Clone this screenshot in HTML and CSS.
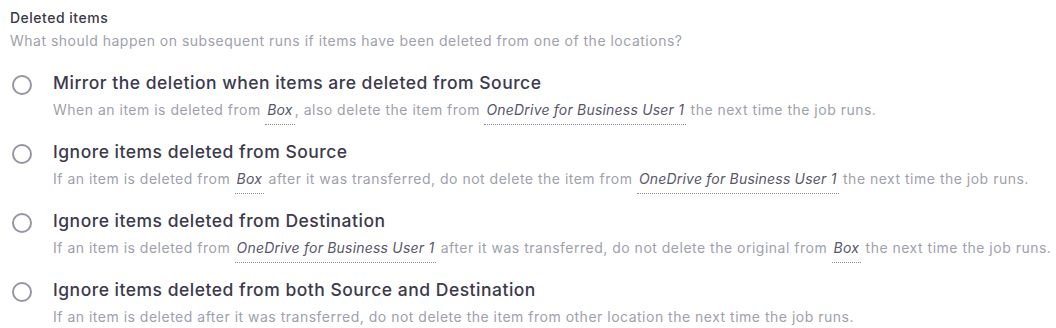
FILE: index.html
```html
<!DOCTYPE html>
<html lang="en">
<head>
  <meta charset="UTF-8" />
  <title>Deleted items</title>
  <link rel="stylesheet" href="styles.css">
</head>
<body>

<div class="section">
  <div class="section-title">Deleted items</div>
  <div class="section-hint">What should happen on subsequent runs if items have been deleted from one of the locations?</div>

  <label class="option">
    <span class="radio"></span>
    <span class="option-body">
      <span class="option-title">Mirror the deletion when items are deleted from Source</span>
      <span class="option-desc">When an item is deleted from <em class="loc">Box</em>, also delete the item from <em class="loc">OneDrive for Business User 1</em> the next time the job runs.</span>
    </span>
  </label>

  <label class="option">
    <span class="radio"></span>
    <span class="option-body">
      <span class="option-title">Ignore items deleted from Source</span>
      <span class="option-desc">If an item is deleted from <em class="loc">Box</em> after it was transferred, do not delete the item from <em class="loc">OneDrive for Business User 1</em> the next time the job runs.</span>
    </span>
  </label>

  <label class="option">
    <span class="radio"></span>
    <span class="option-body">
      <span class="option-title">Ignore items deleted from Destination</span>
      <span class="option-desc">If an item is deleted from <em class="loc">OneDrive for Business User 1</em> after it was transferred, do not delete the original from <em class="loc">Box</em> the next time the job runs.</span>
    </span>
  </label>

  <label class="option">
    <span class="radio"></span>
    <span class="option-body">
      <span class="option-title">Ignore items deleted from both Source and Destination</span>
      <span class="option-desc">If an item is deleted after it was transferred, do not delete the item from other location the next time the job runs.</span>
    </span>
  </label>
</div>

</body>
</html>
```

FILE: styles.css
```css
body {
  margin: 0;
  background: #fff;
  font-family: Inter, "Noto Sans", sans-serif;
  letter-spacing: 0.5px;
}
.section {
  padding: 9px 10px 0;
}
.section-title {
  font-size: 14px;
  line-height: 17px;
  color: #3a3947;
  font-weight: 500;
}
.section-hint {
  font-size: 14px;
  line-height: 17px;
  margin-top: 6px;
  color: #a09fad;
}
.option {
  display: flex;
  gap: 21px;
  margin-top: 23px;
  cursor: pointer;
}
.option + .option {
  margin-top: 23px;
}
.radio {
  flex: none;
  width: 16px;
  height: 16px;
  margin: 3px 0 0 2px;
  border: 2px solid #9795a4;
  border-radius: 50%;
}
.option-body {
  display: flex;
  flex-direction: column;
}
.option-title {
  font-size: 17.5px;
  line-height: 22px;
  font-weight: 500;
  color: #3c3a4c;
}
.option-desc {
  font-size: 14px;
  line-height: 17px;
  margin-top: 7px;
  color: #a09fad;
  white-space: nowrap;
}
.loc {
  display: inline-block;
  color: #58566a;
  letter-spacing: 0.2px;
  padding: 0 2px 6px;
  border-bottom: 1px dotted #8d8b99;
  margin-bottom: -7px;
}
```
